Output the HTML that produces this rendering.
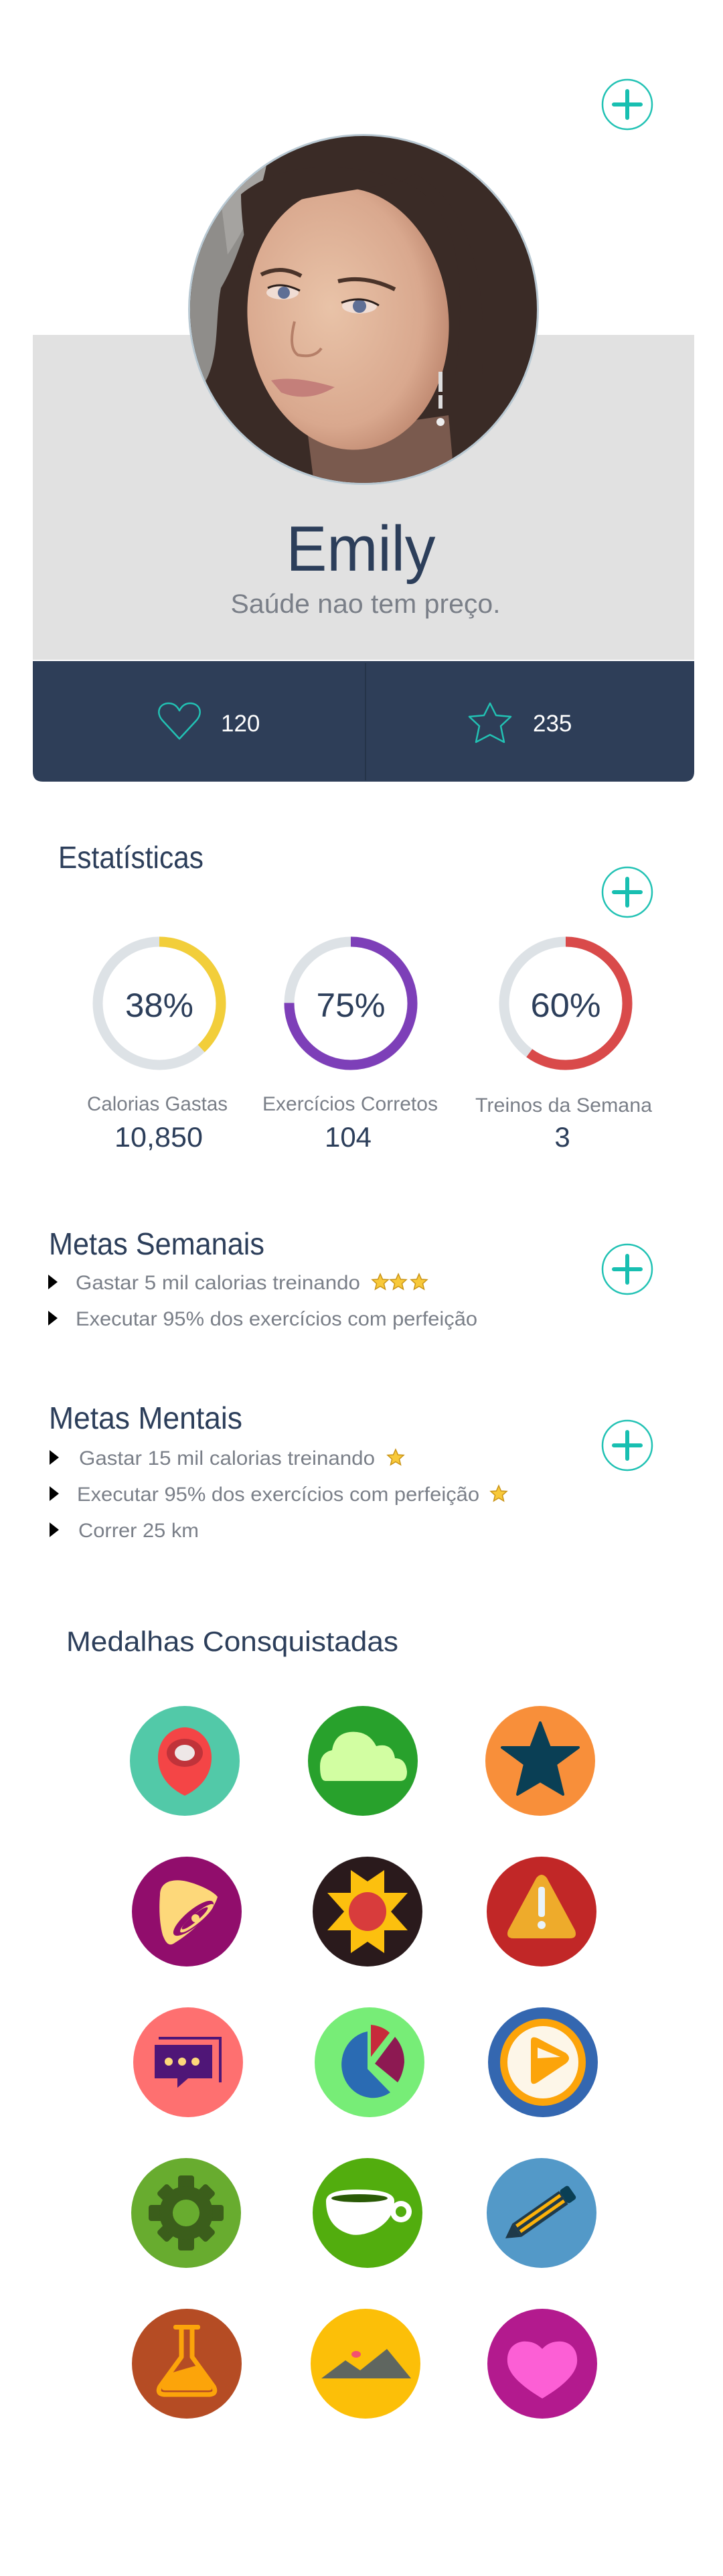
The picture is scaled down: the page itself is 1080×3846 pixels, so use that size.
<!DOCTYPE html>
<html><head><meta charset="utf-8"><style>html,body{margin:0;padding:0;background:#fff}svg{display:block}text{font-family:"Liberation Sans",sans-serif}</style></head><body>
<svg width="1080" height="3846" viewBox="0 0 1080 3846" xmlns="http://www.w3.org/2000/svg">
<defs>
<clipPath id="av"><circle cx="543" cy="462" r="259"/></clipPath>
<radialGradient id="skin" cx="0.42" cy="0.45" r="0.65"><stop offset="0" stop-color="#e9c3a8"/><stop offset="0.7" stop-color="#d9a88e"/><stop offset="1" stop-color="#b88068"/></radialGradient>
<g id="plus"><circle r="37" fill="none" stroke="#22c2b4" stroke-width="2.5"/><path d="M-20,0H20M0,-20V20" stroke="#18bfb1" stroke-width="6" stroke-linecap="round"/></g>
<path id="tri" d="M0,-11L14,0L0,11Z" fill="#000"/>
<path id="gstar" d="M0,-12L3.5,-4 12,-3.5 5.5,2.5 7.5,11 0,6.5 -7.5,11 -5.5,2.5 -12,-3.5 -3.5,-4Z" fill="#f8c93a" stroke="#c99315" stroke-width="1.5"/>
</defs>

<use href="#plus" x="937" y="156"/>

<rect x="49" y="500" width="988" height="485" fill="#e1e1e1"/>
<path d="M49,987H1037V1152Q1037,1167 1022,1167H64Q49,1167 49,1152Z" fill="#2e3e58"/>
<line x1="546" y1="990" x2="546" y2="1165" stroke="#253449" stroke-width="2"/>

<!-- avatar -->
<circle cx="543" cy="462" r="262" fill="#b9c9d3"/>
<g clip-path="url(#av)">
<rect x="280" y="200" width="530" height="530" fill="#3a2b26"/>
<path d="M280,230 L400,230 C380,300 360,380 330,430 C320,480 330,540 300,580 L280,580Z" fill="#8f8d8a"/>
<path d="M330,300 C360,260 380,240 400,235 C390,300 360,350 340,380Z" fill="#a5a3a0"/>
<path d="M460,650 L470,730 L680,730 L670,620Z" fill="#7a5a4e"/>
<ellipse cx="520" cy="476" rx="150" ry="196" fill="url(#skin)" transform="rotate(-6 520 476)"/>
<path d="M360,290 C420,240 520,240 600,270 C560,280 480,290 440,300 C400,320 380,360 372,400 C365,360 360,320 360,290Z" fill="#3a2b26"/>
<path d="M600,270 C680,300 700,400 680,560 L720,560 C730,420 700,300 620,260Z" fill="#3a2b26"/>
<path d="M390,410 Q420,395 450,412 M505,420 Q545,410 590,432" stroke="#4a3329" stroke-width="6" fill="none"/>
<ellipse cx="422" cy="437" rx="24" ry="10" fill="#f0ddd4"/><circle cx="424" cy="437" r="9" fill="#5f6f95"/>
<ellipse cx="537" cy="457" rx="26" ry="11" fill="#f0ddd4"/><circle cx="537" cy="457" r="10" fill="#5f6f95"/>
<path d="M400,430 Q420,420 448,434 M510,452 Q540,440 566,456" stroke="#2a1e1a" stroke-width="3" fill="none"/>
<path d="M440,480 Q430,520 445,530 Q470,535 480,520" stroke="#b57f68" stroke-width="4" fill="none"/>
<path d="M405,568 Q440,560 500,578 Q460,602 420,586Z" fill="#c47f7a"/>
<path d="M658,555 v30 M658,590 v20" stroke="#ddd" stroke-width="6"/><circle cx="658" cy="630" r="6" fill="#eee"/>
</g>

<text x="539" y="852" font-size="96" fill="#2c3e5a" text-anchor="middle" textLength="223" lengthAdjust="spacingAndGlyphs">Emily</text>
<text x="546" y="915" font-size="40" fill="#7a7f88" text-anchor="middle" textLength="403" lengthAdjust="spacingAndGlyphs">Saúde nao tem preço.</text>

<path d="M268,1103 L243,1076 C232,1064 238,1050 252,1050 C260,1050 265,1055 268,1061 C271,1055 276,1050 284,1050 C298,1050 304,1064 293,1076Z" fill="none" stroke="#22c2b4" stroke-width="2.5" stroke-linejoin="round"/>
<text x="330" y="1092" font-size="35" fill="#fff">120</text>
<path d="M732,1050 L741,1068 L763,1070 L748,1084 L753,1108 L732,1097 L711,1108 L716,1084 L701,1070 L723,1068Z" fill="none" stroke="#22c2b4" stroke-width="2.5" stroke-linejoin="round"/>
<text x="796" y="1092" font-size="35" fill="#fff">235</text>

<text x="87" y="1296" font-size="46" fill="#2c3e5a" textLength="217" lengthAdjust="spacingAndGlyphs">Estatísticas</text>
<use href="#plus" x="937" y="1332"/>

<g fill="none" stroke-width="15">
<circle cx="238" cy="1498" r="92" stroke="#dde2e6"/>
<circle cx="238" cy="1498" r="92" stroke="#f2ce3a" stroke-dasharray="220 578" transform="rotate(-90 238 1498)"/>
<circle cx="524" cy="1498" r="92" stroke="#dde2e6"/>
<circle cx="524" cy="1498" r="92" stroke="#7d3fb8" stroke-dasharray="434 578" transform="rotate(-90 524 1498)"/>
<circle cx="845" cy="1498" r="92" stroke="#dde2e6"/>
<circle cx="845" cy="1498" r="92" stroke="#d94a4a" stroke-dasharray="347 578" transform="rotate(-90 845 1498)"/>
</g>
<g font-size="50" fill="#2c3e5a" text-anchor="middle">
<text x="238" y="1518" textLength="102" lengthAdjust="spacingAndGlyphs">38%</text>
<text x="524" y="1518" textLength="103" lengthAdjust="spacingAndGlyphs">75%</text>
<text x="845" y="1518" textLength="105" lengthAdjust="spacingAndGlyphs">60%</text>
</g>
<g font-size="30" fill="#7a7f88" text-anchor="middle">
<text x="235" y="1658" textLength="210" lengthAdjust="spacingAndGlyphs">Calorias Gastas</text>
<text x="523" y="1658" textLength="262" lengthAdjust="spacingAndGlyphs">Exercícios Corretos</text>
<text x="842" y="1660" textLength="264" lengthAdjust="spacingAndGlyphs">Treinos da Semana</text>
</g>
<g font-size="42" fill="#2c3e5a" text-anchor="middle">
<text x="237" y="1712" textLength="132" lengthAdjust="spacingAndGlyphs">10,850</text>
<text x="520" y="1712" textLength="70" lengthAdjust="spacingAndGlyphs">104</text>
<text x="840" y="1712">3</text>
</g>

<text x="73" y="1873" font-size="46" fill="#2c3e5a" textLength="322" lengthAdjust="spacingAndGlyphs">Metas Semanais</text>
<use href="#plus" x="937" y="1895"/>
<use href="#tri" x="72" y="1914"/>
<text x="113" y="1925" font-size="30" fill="#7a7f88" textLength="425" lengthAdjust="spacingAndGlyphs">Gastar 5 mil calorias treinando</text>
<use href="#gstar" x="568" y="1914"/><use href="#gstar" x="595" y="1914"/><use href="#gstar" x="626" y="1914"/>
<use href="#tri" x="72" y="1968"/>
<text x="113" y="1979" font-size="30" fill="#7a7f88" textLength="600" lengthAdjust="spacingAndGlyphs">Executar 95% dos exercícios com perfeição</text>

<text x="73" y="2133" font-size="46" fill="#2c3e5a" textLength="289" lengthAdjust="spacingAndGlyphs">Metas Mentais</text>
<use href="#plus" x="937" y="2158"/>
<use href="#tri" x="74" y="2176"/>
<text x="118" y="2187" font-size="30" fill="#7a7f88" textLength="442" lengthAdjust="spacingAndGlyphs">Gastar 15 mil calorias treinando</text>
<use href="#gstar" x="591" y="2176"/>
<use href="#tri" x="74" y="2230"/>
<text x="115" y="2241" font-size="30" fill="#7a7f88" textLength="601" lengthAdjust="spacingAndGlyphs">Executar 95% dos exercícios com perfeição</text>
<use href="#gstar" x="745" y="2230"/>
<use href="#tri" x="74" y="2284"/>
<text x="117" y="2295" font-size="30" fill="#7a7f88" textLength="180" lengthAdjust="spacingAndGlyphs">Correr 25 km</text>

<text x="99" y="2465" font-size="42" fill="#2c3e5a" textLength="496" lengthAdjust="spacingAndGlyphs">Medalhas Consquistadas</text>

<g transform="translate(276,2629)"><circle r="82" fill="#52c9a8"/>
<path d="M0,52 C-25,40 -40,20 -40,-5 C-40,-32 -20,-50 0,-50 C20,-50 40,-32 40,-5 C40,20 25,40 0,52Z" fill="#f44546"/>
<ellipse cy="-12" rx="27" ry="21" fill="#c0333a"/><ellipse cy="-12" rx="15" ry="12" fill="#eee7e7"/></g>
<g transform="translate(542,2629)"><circle r="82" fill="#28a12c"/>
<path d="M-56,30 L56,30 Q66,30 66,16 Q64,-4 48,-4 Q44,-28 20,-22 Q8,-46 -20,-43 Q-42,-40 -46,-16 Q-64,-12 -64,8 Q-64,30 -56,30Z" fill="#d2fea2"/></g>
<g transform="translate(807,2629)"><circle r="82" fill="#f88f3a"/>
<polygon points="0,-57 14,-20 57,-20 23,5 34,50 0,30 -34,50 -23,5 -57,-20 -14,-20" fill="#0a3f55" stroke="#0a3f55" stroke-width="4" stroke-linejoin="round"/></g>

<g transform="translate(279,2854)"><circle r="82" fill="#910d6c"/>
<path d="M-40,-25 C-40,-45 -20,-50 0,-45 C20,-40 40,-30 46,-22 C40,0 10,30 -20,48 C-28,52 -32,45 -36,35 C-40,20 -42,0 -40,-25Z" fill="#fdd87a"/>
<ellipse cx="10" cy="10" rx="38" ry="12" transform="rotate(-40 10 10)" fill="#910d6c"/>
<ellipse cx="15" cy="10" rx="32" ry="7" transform="rotate(-40 15 10)" fill="#fdd87a"/>
<ellipse cx="12" cy="10" rx="25" ry="5" transform="rotate(-40 12 10)" fill="#910d6c"/>
<circle cx="13" cy="10" r="6" fill="#fdd87a"/></g>
<g transform="translate(549,2854)"><circle r="82" fill="#2a1a1c"/>
<polygon points="0,-45 25,-62 25,-28 60,-28 35,0 60,28 25,28 25,62 0,45 -25,62 -25,28 -60,28 -35,0 -60,-28 -25,-28 -25,-62" fill="#fcc00e"/>
<ellipse rx="28" ry="29" fill="#d83c3c"/></g>
<g transform="translate(809,2854)"><circle r="82" fill="#c12727"/>
<path d="M-8,-50 Q0,-60 8,-50 L50,28 Q54,40 42,40 L-42,40 Q-54,40 -50,28Z" fill="#eeab2b"/>
<rect x="-5" y="-37" width="10" height="45" rx="4" fill="#e9f3f9"/><circle cy="20" r="6" fill="#e9f3f9"/></g>

<g transform="translate(281,3079)"><circle r="82" fill="#fe7070"/>
<path d="M-44,-36 H48 V30" fill="none" stroke="#4f1677" stroke-width="4"/>
<path d="M-50,-26 H36 V24 H0 L-16,38 V24 H-50Z" fill="#4f1677"/>
<circle cx="-29" cy="-1" r="6" fill="#fdd87a"/><circle cx="-9" cy="-1" r="6" fill="#fdd87a"/><circle cx="11" cy="-1" r="6" fill="#fdd87a"/></g>
<g transform="translate(552,3079)"><circle r="82" fill="#77ed77"/>
<path d="M-3,-46 A47,50 0 1 0 31,45 L-3,10Z" fill="#2a6bb3"/>
<path d="M2,-56 Q20,-54 30,-44 L2,-8Z" fill="#c72b3b"/>
<path d="M8,2 L38,-38 Q52,-22 52,0 Q50,18 42,30Z" fill="#8d1952"/></g>
<g transform="translate(811,3079)"><circle r="82" fill="#3467b0"/>
<ellipse rx="64" ry="65" fill="#fca40a"/><ellipse rx="53" ry="54" fill="#fdf6e8"/>
<path d="M-18,-32 Q-18,-40 -8,-36 L34,-14 Q44,-6 34,2 L-8,30 Q-18,36 -18,26Z" fill="#fca40a"/>
<path d="M-8,-22 L26,-8 L-8,-6Z" fill="#fdf6e8"/></g>

<g transform="translate(278,3304)"><circle r="82" fill="#68ac2f"/>
<g fill="#3b5e1b">
<rect x="-12" y="-56" width="24" height="112" rx="4"/>
<rect x="-12" y="-56" width="24" height="112" rx="4" transform="rotate(90)"/>
<rect x="-11" y="-52" width="22" height="104" rx="4" transform="rotate(45)"/>
<rect x="-11" y="-52" width="22" height="104" rx="4" transform="rotate(-45)"/>
<circle r="40"/></g>
<circle r="20" fill="#68ac2f"/></g>
<g transform="translate(549,3304)"><circle r="82" fill="#52ad0e"/>
<circle cx="50" cy="-2" r="16" fill="#fff"/><circle cx="50" cy="-2" r="8" fill="#52ad0e"/>
<path d="M-62,-18 Q-62,-35 -15,-35 Q40,-35 40,-18 Q40,10 10,26 Q-10,35 -25,32 Q-62,22 -62,-18Z" fill="#fff"/>
<ellipse cx="-12" cy="-22" rx="42" ry="6" fill="#2a5a06"/></g>
<g transform="translate(809,3304)"><circle r="82" fill="#5399c8"/>
<g transform="rotate(-35)">
<rect x="-45" y="-12" width="85" height="24" fill="#1f3a4a"/>
<rect x="-42" y="-8" width="80" height="5" fill="#fcb20a"/>
<rect x="-42" y="2" width="80" height="5" fill="#fcb20a"/>
<rect x="40" y="-12" width="16" height="24" rx="4" fill="#0a3f55"/>
<path d="M-45,-12 L-66,0 L-45,12Z" fill="#1f3a4a"/></g></g>

<g transform="translate(279,3529)"><circle r="82" fill="#b54c24"/>
<rect x="-20" y="-58" width="40" height="7" rx="3" fill="#fca40a"/>
<path d="M-8,-52 V-10 L-40,34 Q-46,46 -32,46 H32 Q46,46 40,34 L8,-10 V-52" fill="none" stroke="#fca40a" stroke-width="7" stroke-linejoin="round"/>
<path d="M-30,16 Q-5,8 18,2 L36,34 Q40,40 32,40 H-32 Q-40,40 -36,32Z" fill="#fca40a"/></g>
<g transform="translate(546,3529)"><circle r="82" fill="#fcbf08"/>
<path d="M-66,22 L-30,-5 L-8,10 L32,-22 L68,22Z" fill="#5f6660"/>
<ellipse cx="-14" cy="-14" rx="7" ry="5" fill="#f45070"/></g>
<g transform="translate(810,3529)"><circle r="82" fill="#b31a8e"/>
<path d="M0,52 C-20,40 -50,20 -52,-2 C-54,-26 -36,-35 -22,-33 C-10,-32 -4,-26 0,-22 C4,-26 10,-32 22,-33 C36,-35 54,-26 52,-2 C50,20 20,40 0,52Z" fill="#fc5fd5"/></g>
</svg>
</body></html>
